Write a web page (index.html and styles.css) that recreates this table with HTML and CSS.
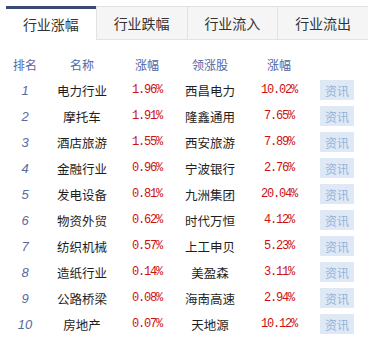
FILE: index.html
```html
<!DOCTYPE html>
<html>
<head>
<meta charset="utf-8">
<link rel="stylesheet" href="styles.css">
</head>
<body>
<div class="tabs">
  <div class="tab active">行业涨幅</div>
  <div class="tab">行业跌幅</div>
  <div class="tab">行业流入</div>
  <div class="tab">行业流出</div>
</div>
<div class="table">
  <div class="row head">
    <div>排名</div><div>名称</div><div>涨幅</div><div>领涨股</div><div>涨幅</div><div></div>
  </div>
  <div class="row"><div class="rank">1</div><div class="name">电力行业</div><div class="pct">1.96%</div><div class="name">西昌电力</div><div class="pct">10.02%</div><div><span class="btn">资讯</span></div></div>
  <div class="row"><div class="rank">2</div><div class="name">摩托车</div><div class="pct">1.91%</div><div class="name">隆鑫通用</div><div class="pct">7.65%</div><div><span class="btn">资讯</span></div></div>
  <div class="row"><div class="rank">3</div><div class="name">酒店旅游</div><div class="pct">1.55%</div><div class="name">西安旅游</div><div class="pct">7.89%</div><div><span class="btn">资讯</span></div></div>
  <div class="row"><div class="rank">4</div><div class="name">金融行业</div><div class="pct">0.96%</div><div class="name">宁波银行</div><div class="pct">2.76%</div><div><span class="btn">资讯</span></div></div>
  <div class="row"><div class="rank">5</div><div class="name">发电设备</div><div class="pct">0.81%</div><div class="name">九洲集团</div><div class="pct">20.04%</div><div><span class="btn">资讯</span></div></div>
  <div class="row"><div class="rank">6</div><div class="name">物资外贸</div><div class="pct">0.62%</div><div class="name">时代万恒</div><div class="pct">4.12%</div><div><span class="btn">资讯</span></div></div>
  <div class="row"><div class="rank">7</div><div class="name">纺织机械</div><div class="pct">0.57%</div><div class="name">上工申贝</div><div class="pct">5.23%</div><div><span class="btn">资讯</span></div></div>
  <div class="row"><div class="rank">8</div><div class="name">造纸行业</div><div class="pct">0.14%</div><div class="name">美盈森</div><div class="pct">3.11%</div><div><span class="btn">资讯</span></div></div>
  <div class="row"><div class="rank">9</div><div class="name">公路桥梁</div><div class="pct">0.08%</div><div class="name">海南高速</div><div class="pct">2.94%</div><div><span class="btn">资讯</span></div></div>
  <div class="row"><div class="rank">10</div><div class="name">房地产</div><div class="pct">0.07%</div><div class="name">天地源</div><div class="pct">10.12%</div><div><span class="btn">资讯</span></div></div>
</div>
</body>
</html>
```
FILE: styles.css
```css
* { box-sizing: border-box; }
body {
  margin: 0;
  background: #fff;
  font-family: "Noto Sans CJK SC", "Liberation Sans", sans-serif;
  color: #222;
  width: 370px;
  height: 340px;
  overflow: hidden;
}
.tabs {
  display: flex;
  margin: 6px 2px 0 6px;
  height: 34px;
}
.tab {
  flex: 1;
  display: flex;
  align-items: center;
  justify-content: center;
  font-size: 14px;
  color: #333;
  background: #f5f5f5;
  border-top: 1px solid #e2e2e2;
  border-bottom: 1px solid #e2e2e2;
  border-left: 1px solid #e2e2e2;
}
.tab.active {
  background: #fff;
  border-top: 3px solid #3b4a75;
  border-bottom: none;
  border-left: none;
  padding-bottom: 2px;
}
.table {
  margin: 11px 0 0 6px;
  width: 356px;
}
.row {
  display: grid;
  grid-template-columns: 38px 76px 54px 72px 66px 50px;
  height: 26px;
  align-items: center;
  text-align: center;
  font-size: 12px;
}
.head {
  color: #5366a6;
  font-size: 12px;
}
.rank {
  font-family: "Liberation Sans", Arial, sans-serif;
  font-style: italic;
  font-size: 13px;
  color: #5a6aa0;
}
.name {
  color: #1e1e1e;
  font-size: 12.5px;
}
.pct {
  font-family: "Liberation Mono", monospace;
  font-size: 12px;
  letter-spacing: -1.2px;
  color: #cc1111;
}
.btn {
  display: inline-flex;
  align-items: center;
  justify-content: center;
  width: 34px;
  height: 20px;
  background: #dfe9f5;
  color: #93b2d8;
  font-size: 12px;
}
```
